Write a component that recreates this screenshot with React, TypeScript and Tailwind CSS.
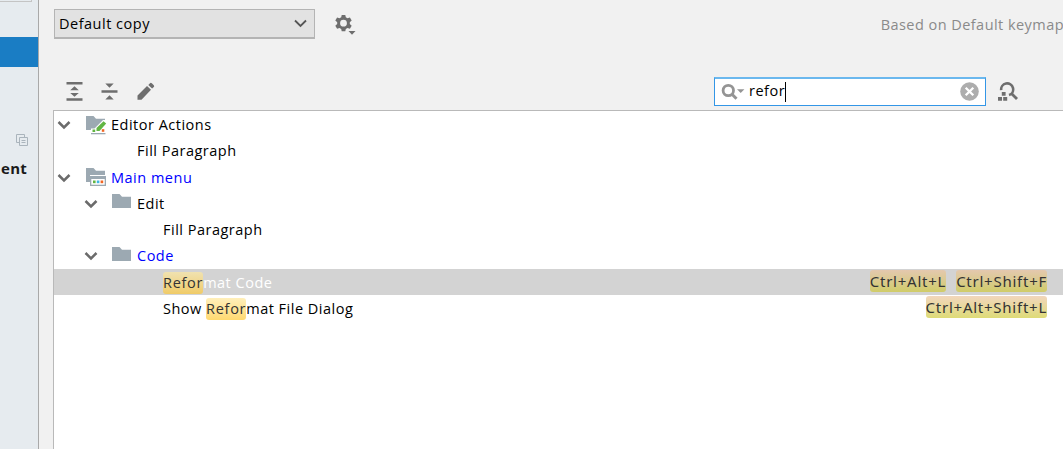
import { ReactNode } from 'react';

type IconKind = 'actions' | 'menu' | 'folder';

interface TreeItem {
  label: string;
  level: number;
  icon?: IconKind;
  modified?: boolean;
  selected?: boolean;
  match?: string;
  shortcuts?: string[];
}

const items: TreeItem[] = [
  { label: 'Editor Actions', level: 0, icon: 'actions' },
  { label: 'Fill Paragraph', level: 1 },
  { label: 'Main menu', level: 0, icon: 'menu', modified: true },
  { label: 'Edit', level: 1, icon: 'folder' },
  { label: 'Fill Paragraph', level: 2 },
  { label: 'Code', level: 1, icon: 'folder', modified: true },
  { label: 'Reformat Code', level: 2, match: 'Refor', selected: true, shortcuts: ['Ctrl+Alt+L', 'Ctrl+Shift+F'] },
  { label: 'Show Reformat File Dialog', level: 2, match: 'Refor', shortcuts: ['Ctrl+Alt+Shift+L'] },
];

const indents = ['pl-0', 'pl-[26px]', 'pl-[52px]'];

const Chevron = () => (
  <svg width="14" height="10" viewBox="0 0 14 10" fill="none" stroke="#6b6b6b" strokeWidth="2.5">
    <path d="M1.5 2 L7 7.5 L12.5 2" />
  </svg>
);

const TreeIcon = ({ kind }: { kind: IconKind }) => (
  <svg width="21" height="20" viewBox="0 0 21 20">
    <path d="M0 1 H7.5 L10 3.8 H19 V15 H0 Z" fill="#9ca9b2" />
    {kind === 'actions' && (
      <>
        <path d="M5 19.5 V13.5 H8.5 L17 5 H21 V19.5 Z" fill="#fff" />
        <path d="M10.5 16 V13 L17.5 6.2 L20.2 8.5 L13.5 16 Z" fill="#62b543" />
        <path d="M6.5 14.5 h2.7 v2.5 h-2.7z" fill="#62b543" />
        <path d="M15.8 14.2 h2.5 v2.6 h-2.5z" fill="#f26522" />
        <path d="M5 18 H19.5 V19.3 H5 Z" fill="#9ca9b2" />
      </>
    )}
    {kind === 'menu' && (
      <>
        <path d="M4 8 H21 V20 H4 Z" fill="#fff" />
        <path d="M4 9 H20 V19 H4 Z" fill="#9ca9b2" />
        <path d="M5.3 12 H18.7 V17.7 H5.3 Z" fill="#fff" />
        <path d="M7 13.5 h2.6 v2.7 h-2.6z" fill="#62b543" />
        <path d="M10.8 13.5 h2.6 v2.7 h-2.6z" fill="#40b6e0" />
        <path d="M14.6 13.5 h2.6 v2.7 h-2.6z" fill="#f26522" />
      </>
    )}
  </svg>
);

const highlight = ({ label, match, selected }: TreeItem): ReactNode => {
  if (!match) return label;
  const at = label.indexOf(match);
  return (
    <>
      {label.slice(0, at)}
      <span
        className={`inline-block h-[22px] rounded-[3px] bg-linear-to-b leading-[22px] tracking-[0.7px] text-[#333] ${
          selected ? 'from-[#f0e2b0] to-[#f0cb66]' : 'from-[#ffefba] to-[#ffd970]'
        }`}
      >
        {match}
      </span>
      {label.slice(at + match.length)}
    </>
  );
};

const TreeRow = ({ item }: { item: TreeItem }) => {
  const color = item.selected ? 'text-white' : item.modified ? 'text-[#0000ff]' : 'text-black';
  return (
    <div className={`flex h-[26.25px] items-center pr-4 ${item.selected ? 'bg-[#d3d3d3]' : ''}`}>
      <div className={`flex items-center ${indents[item.level]}`}>
        <div className={`flex w-[32px] shrink-0 items-center pt-[2px] ${item.level ? 'pl-[4px]' : 'pl-[3px]'}`}>
          {item.icon && <Chevron />}
        </div>
        <div className="flex w-[25px] shrink-0 items-center pt-px">{item.icon && <TreeIcon kind={item.icon} />}</div>
        <div className={`pt-[2px] whitespace-pre ${color}`}>{highlight(item)}</div>
      </div>
      <div className="ml-auto flex gap-[10px] pb-px text-[15px] tracking-[0.75px]">
        {item.shortcuts?.map((s) => (
          <kbd
            key={s}
            className={`h-[22px] rounded-[3px] bg-linear-to-b font-['Noto_Sans'] leading-[22px] text-[#333] ${
              item.selected ? 'from-[#e4c8ae] to-[#d0cc68]' : 'from-[#f2d6bc] to-[#dedb76]'
            }`}
          >
            {s}
          </kbd>
        ))}
      </div>
    </div>
  );
};

const Sidebar = () => (
  <aside className="flex h-full w-[39px] shrink-0 flex-col border-r border-[#a9a9a9] bg-[#e6ebef]">
    <div className="h-[2px] w-[32px] border-r border-b border-[#c4c4c4] bg-[#e6ebef]" />
    <div className="mt-[35px] h-[30px] bg-[#1a7dc4]" />
    <svg className="mt-[67px] ml-[16px]" width="12" height="12" viewBox="0 0 12 12" fill="none" stroke="#aab4bc">
      <path d="M3.5 8.5 H0.5 V0.5 H8.5 V3.5" />
      <path d="M3.5 3.5 H11.5 V11.5 H3.5 Z M5.5 6.5 H9.5 M5.5 8.5 H9.5" />
    </svg>
    <div className="mt-[11px] pl-px text-[15px] leading-[22px] font-bold tracking-[0.3px] text-[#1a1a1a]">ent</div>
  </aside>
);

const Toolbar = () => (
  <div className="flex h-[38px] items-center">
    <div className="flex gap-[18px] pt-px pl-[13px] text-[#6e6e6e]">
      <svg width="17" height="20" viewBox="0 0 17 20" fill="currentColor">
        <path d="M.5 0h16v2.5H.5zM.5 16.3h16v2.5H.5zM8.5 4.3 12.8 8.2H4.2zM8.5 14.8 12.8 11H4.2z" />
      </svg>
      <svg width="17" height="20" viewBox="0 0 17 20" fill="currentColor">
        <path d="M.5 8.3h16v2.4H.5zM4.3 1.5h8.4L8.5 5.7zM8.5 13.2 12.7 17.6H4.3z" />
      </svg>
      <svg width="20" height="20" viewBox="0 0 20 20" fill="currentColor">
        <path d="M1.5 13.5 11 4 15 7.8 5.5 17.8H1.5zM12.3 2.9l1.7-1.7q.9-.7 1.8.1l2 2q.8.9 0 1.8l-1.7 1.5z" />
      </svg>
    </div>
    <div className="ml-auto flex h-[29px] w-[272px] items-center border border-t-2 border-[#3396e6] border-t-[#6bb8ee] bg-white pr-[6px] pl-[6px]">
      <svg width="24" height="18" viewBox="0 0 24 18">
        <circle cx="7.3" cy="7.5" r="5.2" fill="none" stroke="#949494" strokeWidth="2.8" />
        <path d="M11 11.2 15.5 15.8" stroke="#949494" strokeWidth="3" />
        <path d="M16 6.2h7.4L19.7 10z" fill="#949494" />
      </svg>
      <span className="-mt-[2px] ml-[4px] text-black">refor</span>
      <span className="h-[20px] w-px bg-black" />
      <svg className="ml-auto" width="19" height="19" viewBox="0 0 19 19">
        <circle cx="9.5" cy="9.5" r="9.3" fill="#adadad" />
        <path d="M5.7 5.7 13.3 13.3M13.3 5.7 5.7 13.3" stroke="#fff" strokeWidth="2.3" />
      </svg>
    </div>
    <svg className="mt-px mr-[44px] ml-[12px]" width="21" height="20" viewBox="0 0 21 20" fill="#6e6e6e">
      <path d="M3.2 8.2A6 6 0 1 1 11 13.1" fill="none" stroke="#6e6e6e" strokeWidth="2.6" />
      <path d="M13.2 11.3 19 17.1" stroke="#6e6e6e" strokeWidth="2.8" />
      <path d="M3.8 10h3.8v3.8H3.8zM0 15h4v3.8H0zM5.2 15h4v3.8h-4z" />
    </svg>
  </div>
);

export default function App() {
  return (
    <div className="flex h-[449px] w-[1063px] overflow-hidden bg-[#f1f1f1] font-['Open_Sans','Noto_Sans',sans-serif] text-[14.5px] leading-[22px] tracking-[0.5px]">
      <Sidebar />
      <main className="flex min-w-0 flex-1 flex-col pl-[14px]">
        <div className="flex h-[72px] items-start pt-[9px] pl-px">
          <div className="flex h-[30px] w-[261px] items-center justify-between border border-b-2 border-[#b4b4b4] bg-[#e2e2e2] pr-[7px] pl-[4px] text-black">
            <span>Default copy</span>
            <svg width="13" height="9" viewBox="0 0 13 9" fill="none" stroke="#555" strokeWidth="1.8">
              <path d="M1 1.5 6.5 7 12 1.5" />
            </svg>
          </div>
          <svg className="mt-[5px] ml-[20px]" width="21" height="22" viewBox="0 0 21 22" fill="#6e6e6e">
            <path
              fillRule="evenodd"
              d="M6.7 1h3.6l.5 2.3 1.7 1 2.4-.8 1.8 3-1.9 1.7v1.9l1.9 1.7-1.8 3-2.4-.8-1.7 1-.5 2.3H6.7l-.5-2.3-1.7-1-2.4.8-1.8-3 1.9-1.7V8.2L.3 6.5l1.8-3 2.4.8 1.7-1zM8.5 5.8a3.4 3.4 0 1 0 0 6.8 3.4 3.4 0 0 0 0-6.8z"
            />
            <path d="M13.5 17h7L17 20.8z" />
          </svg>
          <span className="mt-[5px] -mr-px ml-auto tracking-[0.45px] whitespace-nowrap text-[#8a8a8a]">
            Based on Default keymap
          </span>
        </div>
        <Toolbar />
        <div className="flex-1 border-t border-l border-[#b9b9b9] bg-white">
          {items.map((item, i) => (
            <TreeRow key={i} item={item} />
          ))}
        </div>
      </main>
    </div>
  );
}
